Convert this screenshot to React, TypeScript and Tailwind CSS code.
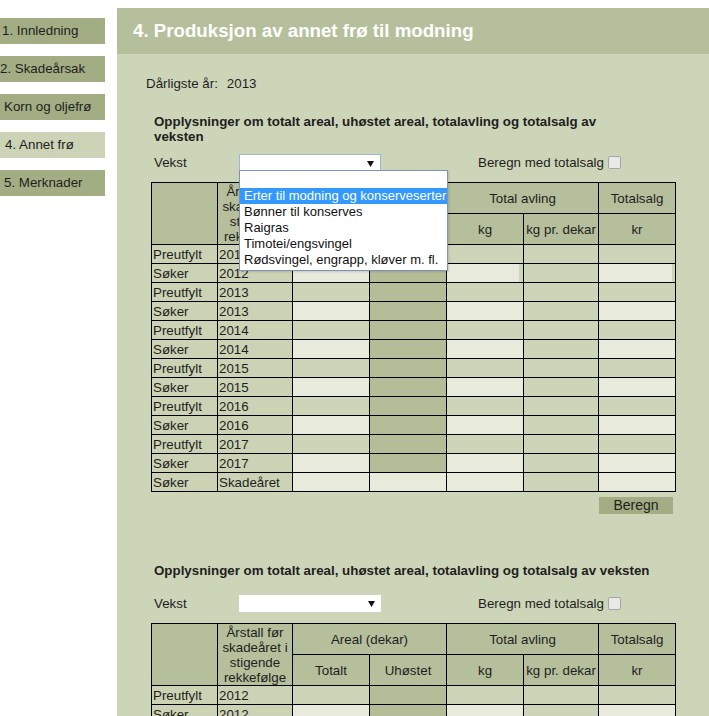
import React from "react";

const FONT = { fontFamily: '"Liberation Sans", Arial, sans-serif' };

type RowType = "pre" | "sok" | "skade";

const rows: { a: string; b: string; t: RowType }[] = [
  { a: "Preutfylt", b: "2012", t: "pre" },
  { a: "Søker", b: "2012", t: "sok" },
  { a: "Preutfylt", b: "2013", t: "pre" },
  { a: "Søker", b: "2013", t: "sok" },
  { a: "Preutfylt", b: "2014", t: "pre" },
  { a: "Søker", b: "2014", t: "sok" },
  { a: "Preutfylt", b: "2015", t: "pre" },
  { a: "Søker", b: "2015", t: "sok" },
  { a: "Preutfylt", b: "2016", t: "pre" },
  { a: "Søker", b: "2016", t: "sok" },
  { a: "Preutfylt", b: "2017", t: "pre" },
  { a: "Søker", b: "2017", t: "sok" },
  { a: "Søker", b: "Skadeåret", t: "skade" },
];

const nav = [
  { label: "1. Innledning", cls: "flex h-[26px] items-center bg-[#a3ad83] pl-[2px] whitespace-nowrap" },
  { label: "2. Skadeårsak", cls: "flex h-[26px] items-center bg-[#a3ad83] pl-[0px] whitespace-nowrap" },
  { label: "Korn og oljefrø", cls: "flex h-[26px] items-center bg-[#a3ad83] pl-[4px] whitespace-nowrap" },
  { label: "4. Annet frø", cls: "flex h-[26px] items-center bg-[#ccd3b6] pl-[5px] whitespace-nowrap" },
  { label: "5. Merknader", cls: "flex h-[26px] items-center bg-[#a3ad83] pl-[4px] whitespace-nowrap" },
];

const TD = "border border-black p-0 h-[19px] text-[13.33px] leading-[15px]";
const C12 = TD + " bg-[#cbd3b4] pl-[1px] text-left whitespace-nowrap overflow-hidden";
const MID = TD + " bg-[#cdd5b8]";
const LIGHT = TD + " bg-[#e8ebdc]";
const DARK = TD + " bg-[#b4bd98]";
const TH = "border border-black p-0 bg-[#b5bf9b] text-[13.33px] leading-[15px] font-normal text-center";

function Arrow() {
  return (
    <svg width="7" height="6" viewBox="0 0 7 6" className="absolute right-[6px] top-[6px]">
      <path d="M0 0 H7 L3.5 6 Z" fill="#111" />
    </svg>
  );
}

function DataTable({ first }: { first?: boolean }) {
  return (
    <table className="mt-[11px] w-[524px] table-fixed border-collapse">
      <colgroup>
        <col className="w-[66px]" />
        <col className="w-[75px]" />
        <col className="w-[77px]" />
        <col className="w-[77px]" />
        <col className="w-[77px]" />
        <col className="w-[75px]" />
        <col className="w-[77px]" />
      </colgroup>
      <thead>
        <tr className="h-[31px]">
          <th rowSpan={2} className={TH}></th>
          <th rowSpan={2} className={TH}>
            Årstall før skadeåret i stigende rekkefølge
          </th>
          <th colSpan={2} className={TH}>Areal (dekar)</th>
          <th colSpan={2} className={TH}>Total avling</th>
          <th className={TH}>Totalsalg</th>
        </tr>
        <tr className="h-[31px]">
          <th className={TH}>Totalt</th>
          <th className={TH}>Uhøstet</th>
          <th className={TH}>kg</th>
          <th className={TH + " whitespace-nowrap"}>kg pr. dekar</th>
          <th className={TH}>kr</th>
        </tr>
      </thead>
      <tbody>
        {rows.map((r, i) => {
          const narrow = first && i === 1;
          const c3 = r.t === "pre" ? MID : LIGHT;
          const c4 = r.t === "skade" ? LIGHT : DARK;
          const c5 = r.t === "pre" ? MID : LIGHT;
          const c7 = r.t === "pre" ? MID : LIGHT;
          return (
            <tr key={i} className="h-[19px]">
              <td className={C12}>{r.a}</td>
              <td className={C12}>{r.b}</td>
              <td className={c3}></td>
              <td className={c4}></td>
              {narrow ? (
                <td className={MID}>
                  <div className="h-[18px] w-[72px] bg-[#e8ebdc]" />
                </td>
              ) : (
                <td className={c5}></td>
              )}
              <td className={MID}></td>
              {narrow ? (
                <td className={MID}>
                  <div className="h-[18px] w-[73px] bg-[#e8ebdc]" />
                </td>
              ) : (
                <td className={c7}></td>
              )}
            </tr>
          );
        })}
      </tbody>
    </table>
  );
}

function Dropdown() {
  const opts = [
    "Erter til modning og konserveserter",
    "Bønner til konserves",
    "Raigras",
    "Timotei/engsvingel",
    "Rødsvingel, engrapp, kløver m. fl.",
  ];
  return (
    <div className="absolute left-[-1px] top-full z-10 w-[209px] border border-[#7f93b8] bg-white pb-[2px] shadow-[1px_1px_2px_rgba(0,0,0,0.15)]">
      <div className="h-[17px]" />
      {opts.map((o, i) => (
        <div
          key={o}
          className={
            i === 0
              ? "h-[16px] whitespace-nowrap bg-[#3399ff] pl-[4px] text-[13px] leading-[16px] text-white"
              : "h-[16px] whitespace-nowrap pl-[4px] text-[13px] leading-[16px] text-[#111]"
          }
        >
          {o}
        </div>
      ))}
    </div>
  );
}

function Section({ first }: { first?: boolean }) {
  return (
    <div className={first ? "pl-[34px] pt-[23px]" : "pl-[34px] pt-[49px]"}>
      <div
        className={
          first
            ? "w-[470px] pl-[3px] text-[13.33px] font-bold leading-[15px]"
            : "pl-[3px] text-[13.33px] font-bold leading-[15px]"
        }
      >
        Opplysninger om totalt areal, uhøstet areal, totalavling og totalsalg av veksten
      </div>
      <div
        className={
          first
            ? "mt-[10px] flex h-[17px] items-center text-[13.33px]"
            : "mt-[17px] flex h-[17px] items-center text-[13.33px]"
        }
      >
        <div className="w-[88px] pl-[3px]">Vekst</div>
        <div
          className={
            first
              ? "relative h-[17px] w-[142px] border border-[#9fb4d6] bg-white"
              : "relative h-[17px] w-[142px] bg-white"
          }
        >
          <Arrow />
          {first && <Dropdown />}
        </div>
        <div className="ml-[97px] whitespace-nowrap">Beregn med totalsalg</div>
        <div className="ml-[4px] h-[13px] w-[13px] rounded-[2px] border border-[#a6a6a6] bg-[#e9e9e9]" />
      </div>
      <DataTable first={first} />
      {first && (
        <div className="ml-[448px] mt-[5px] h-[17px] w-[74px] bg-[#a3ad83] text-center text-[14px] leading-[17px]">
          Beregn
        </div>
      )}
    </div>
  );
}

export default function App() {
  return (
    <div className="flex h-[716px] w-[709px] overflow-hidden bg-white text-[#1e1e1e]" style={FONT}>
      <div className="flex w-[105px] shrink-0 flex-col gap-[12px] overflow-hidden pt-[18px] text-[13.33px]">
        {nav.map((n) => (
          <div key={n.label} className={n.cls}>
            {n.label}
          </div>
        ))}
      </div>
      <div className="ml-[12px] mt-[8px] flex min-w-0 flex-1 flex-col bg-[#cdd5b8]">
        <div className="flex h-[46px] shrink-0 items-center bg-[#b5bf9b] pl-[16px] text-[18.7px] font-bold text-white">
          4. Produksjon av annet frø til modning
        </div>
        <div className="pl-[29px] pt-[22px] text-[13.33px] leading-[15px]">
          Dårligste år:<span className="ml-[9px]">2013</span>
        </div>
        <Section first />
        <Section />
      </div>
    </div>
  );
}
